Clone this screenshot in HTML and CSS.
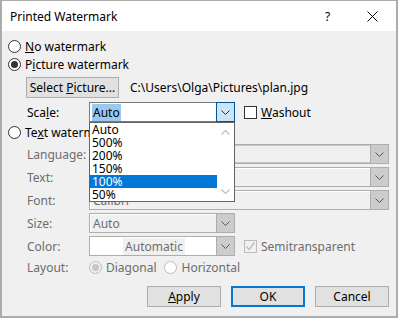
FILE: index.html
```html
<!DOCTYPE html>
<html>
<head>
<meta charset="utf-8">
<link rel="stylesheet" href="styles.css">
</head>
<body>
<div class="win">
  <div class="titlebar">
    <span class="title">Printed Watermark</span>
    <span class="help">?</span>
    <svg class="close" width="11" height="11" viewBox="0 0 11 11"><path d="M0.5 0.5 L10.5 10.5 M10.5 0.5 L0.5 10.5" stroke="#000" stroke-width="1" fill="none"/></svg>
  </div>
  <div class="body">
    <div class="row r1"><span class="radio"></span><span class="rtext"><u>N</u>o watermark</span></div>
    <div class="row r2"><span class="radio checked"></span><span class="rtext">P<u>i</u>cture watermark</span></div>
    <div class="row r3"><div class="btn selbtn"><span>Select <u>P</u>icture...</span></div><span class="path">C:\Users\Olga\Pictures\plan.jpg</span></div>
    <div class="row r4">
      <span class="lbl">Sca<u>l</u>e:</span>
      <div class="combo scale">
        <div class="cval"><span class="seltext">Auto</span></div>
        <div class="cbtn active"><svg width="9" height="5" viewBox="0 0 9 5"><polyline points="0.5,0.5 4.5,4.5 8.5,0.5" fill="none" stroke="#333" stroke-width="1"/></svg></div>
        <div class="list">
          <div class="items">
            <div class="item">Auto</div>
            <div class="item">500%</div>
            <div class="item">200%</div>
            <div class="item">150%</div>
            <div class="item hl">100%</div>
            <div class="item">50%</div>
          </div>
          <div class="sbar">
            <svg width="9" height="5" viewBox="0 0 9 5"><polyline points="0.5,4.5 4.5,0.5 8.5,4.5" fill="none" stroke="#c2c2c2" stroke-width="1.3"/></svg>
            <svg width="9" height="5" viewBox="0 0 9 5"><polyline points="0.5,0.5 4.5,4.5 8.5,0.5" fill="none" stroke="#c2c2c2" stroke-width="1.3"/></svg>
          </div>
        </div>
      </div>
      <span class="check wash"></span><span class="ctext"><u>W</u>ashout</span>
    </div>
    <div class="row r5"><span class="radio"></span><span class="rtext">Te<u>x</u>t watermark</span></div>
    <div class="row rc"><span class="lbl dis">Language:</span><div class="combo wide dcombo"><div class="cval"></div><div class="cbtn dbtn"><svg width="9" height="5" viewBox="0 0 9 5"><polyline points="0.5,0.5 4.5,4.5 8.5,0.5" fill="none" stroke="#555" stroke-width="1"/></svg></div></div></div>
    <div class="row rc"><span class="lbl dis">Text:</span><div class="combo wide dcombo edit"><div class="cval"></div><div class="cbtn dbtn"><svg width="9" height="5" viewBox="0 0 9 5"><polyline points="0.5,0.5 4.5,4.5 8.5,0.5" fill="none" stroke="#555" stroke-width="1"/></svg></div></div></div>
    <div class="row rc"><span class="lbl dis">Font:</span><div class="combo wide dcombo edit"><div class="cval"><span class="dtext">Calibri</span></div><div class="cbtn dbtn"><svg width="9" height="5" viewBox="0 0 9 5"><polyline points="0.5,0.5 4.5,4.5 8.5,0.5" fill="none" stroke="#555" stroke-width="1"/></svg></div></div></div>
    <div class="row rc"><span class="lbl dis">Size:</span><div class="combo dcombo edit size"><div class="cval"><span class="dtext">Auto</span></div><div class="cbtn dbtn"><svg width="9" height="5" viewBox="0 0 9 5"><polyline points="0.5,0.5 4.5,4.5 8.5,0.5" fill="none" stroke="#555" stroke-width="1"/></svg></div></div></div>
    <div class="row rc"><span class="lbl dis">Color:</span><div class="combo color"><div class="cval center"><span class="autotext">Automatic</span></div><div class="cbtn dbtn"><svg width="9" height="5" viewBox="0 0 9 5"><polyline points="0.5,0.5 4.5,4.5 8.5,0.5" fill="none" stroke="#555" stroke-width="1"/></svg></div></div>
      <span class="check dischk"><svg width="11" height="11" viewBox="0 0 11 11"><polyline points="1.5,5.5 4,8.5 9.5,1.5" fill="none" stroke="#bcbcbc" stroke-width="1.3"/></svg></span><span class="ctext dis">Semitransparent</span>
    </div>
    <div class="row r11"><span class="lbl dis">Layout:</span><span class="radio disr checked"></span><span class="rtext dis">Diagonal</span><span class="radio disw"></span><span class="rtext dis">Horizontal</span></div>
    <div class="row btns"><div class="btn"><span><u>A</u>pply</span></div><div class="btn ok">OK</div><div class="btn">Cancel</div></div>
  </div>
</div>
</body>
</html>
```

FILE: styles.css
```css
* { box-sizing: border-box; }
html, body { margin: 0; padding: 0; }
body { width: 398px; height: 318px; overflow: hidden; font-family: "Noto Sans", "Open Sans", sans-serif; font-size: 12px; color: #000; }
.win { width: 398px; height: 318px; border: 2px solid #acacac; border-top-width: 1px; background: #f0f0f0; display: flex; flex-direction: column; }
.titlebar { height: 30px; background: #fff; display: flex; align-items: center; padding-left: 8px; flex: none; }
.title { flex: 1; font-size: 12px; }
.help { width: 10px; margin-right: 32px; font-size: 12px; }
.close { margin-right: 18px; }
.body { flex: 1; padding: 0 7px 0 6px; display: flex; flex-direction: column; }
.row { display: flex; align-items: center; flex: none; }
.r1 { margin-top: 6px; height: 18px; }
.r2 { height: 18px; }
.r3 { margin-top: 4px; height: 21px; }
.r4 { margin-top: 4px; height: 20px; }
.r5 { margin-top: 1px; height: 18px; }
.rc { margin-top: 3px; height: 20px; }
.r11 { margin-top: 2px; height: 18px; }
.btns { margin-top: 10px; height: 21px; justify-content: flex-end; gap: 10px; }
.radio { width: 13px; height: 13px; border: 1px solid #333; border-radius: 50%; background: #fff; flex: none; display: flex; align-items: center; justify-content: center; }
.radio.checked::after { content: ""; width: 7px; height: 7px; border-radius: 50%; background: #333; }
.radio.disr { border-color: #bcbcbc; background: #f0f0f0; margin-left: 0; }
.radio.disr.checked::after { background: #c6c6c6; }
.radio.disw { border-color: #bcbcbc; margin-left: 8px; }
.rtext { margin-left: 4px; white-space: nowrap; }
.dis { color: #6d6d6d; }
.btn { height: 21px; width: 74px; border: 1px solid #adadad; background: #e1e1e1; display: flex; align-items: center; justify-content: center; flex: none; }
.btn.ok { border: 2px solid #0078d7; }
.selbtn { width: 93px; margin-left: 18px; }
.path { margin-left: 11px; }
.lbl { width: 62px; margin-left: 19px; flex: none; }
.combo { position: relative; height: 20px; width: 146px; border: 1px solid #7a7a7a; background: #fff; display: flex; flex: none; }
.combo.wide { width: 300px; }
.cval { flex: 1; display: flex; align-items: center; padding-left: 2px; overflow: hidden; }
.cval.center { justify-content: center; }
.seltext { background: #99c9ef; padding: 0 1px; }
.cbtn { width: 18px; display: flex; align-items: center; justify-content: center; flex: none; }
.cbtn.active { background: #cce4f7; border: 1px solid #005499; margin: -1px -1px -1px 0; width: 19px; }
.dcombo { border: 1px solid #adadad; background: #f0f0f0; box-shadow: inset 0 0 0 1px #c4c4c4; }
.dcombo.edit .cval { background: #f0f0f0; border-top: 1px solid #fff; border-left: 1px solid #fff; }
.dbtn { background: #cccccc; border-left: 1px solid #adadad; }
.color { border: 1px solid #adadad; }
.autotext { background: #f0f0f0; color: #6d6d6d; padding: 0 2px; }
.dtext { color: #6d6d6d; }
.list { position: absolute; left: -1px; top: 19px; width: 146px; height: 80px; background: #fff; border: 1px solid #646464; display: flex; z-index: 5; }
.items { flex: 1; }
.item { height: 13px; line-height: 13px; padding-left: 2px; }
.item.hl { background: #0078d7; color: #fff; }
.sbar { width: 17px; display: flex; flex-direction: column; justify-content: space-between; align-items: center; padding: 7px 0 7px; }
.check { width: 13px; height: 13px; border: 1px solid #333; background: #fff; flex: none; display: flex; align-items: center; justify-content: center; }
.wash { margin-left: 9px; }
.dischk { margin-left: 9px; border-color: #bcbcbc; background: #f0f0f0; }
.ctext { margin-left: 4px; }
u { text-decoration: underline; text-underline-offset: 1px; }
```
